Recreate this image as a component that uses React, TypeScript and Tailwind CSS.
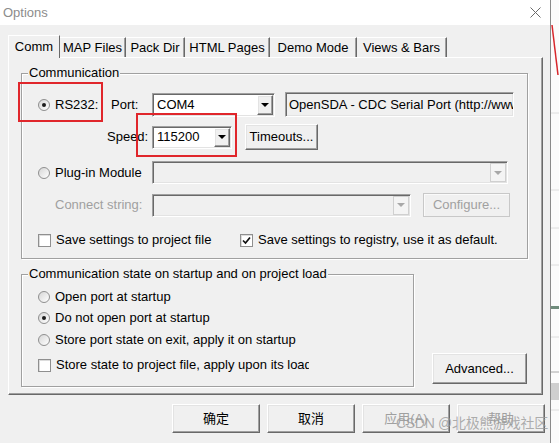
import React from "react";

const sunken =
  "border border-t-[#a0a0a0] border-l-[#a0a0a0] border-r-white border-b-white shadow-[inset_1px_1px_0_#696969,inset_-1px_-1px_0_#e3e3e3]";
const raised =
  "border border-t-white border-l-white border-r-[#696969] border-b-[#696969] shadow-[inset_-1px_-1px_0_#a0a0a0,inset_1px_1px_0_#e3e3e3] bg-[#f0f0f0]";

function Radio({ on }: { on?: boolean }) {
  return (
    <span className="flex h-[12px] w-[12px] shrink-0 items-center justify-center rounded-full border border-[#8f8f8f] bg-[linear-gradient(135deg,#d6d6d6,#ffffff)]">
      {on && <span className="h-[4px] w-[4px] rounded-full bg-[#1c1c1c]" />}
    </span>
  );
}

function Check({ on }: { on?: boolean }) {
  return (
    <span className="flex h-[13px] w-[13px] shrink-0 items-center justify-center border border-[#8f8f8f] bg-white shadow-[inset_1px_1px_0_#dcdcdc]">
      {on && (
        <svg width="9" height="9" viewBox="0 0 9 9">
          <path d="M1 4.5 L3.5 7 L8 1.5" stroke="#111" strokeWidth="1.7" fill="none" />
        </svg>
      )}
    </span>
  );
}

function Combo({ className, value, disabled }: { className: string; value?: string; disabled?: boolean }) {
  return (
    <div className={`${sunken} ${className} flex p-[1px] ${disabled ? "bg-[#f0f0f0]" : "bg-white"}`}>
      <div className="flex flex-1 items-center pl-[3px] text-[13px]">{value}</div>
      <div
        className={`flex w-[16px] items-center justify-center ${
          disabled ? "border border-[#d0d0d0] bg-[#f4f4f4]" : raised
        }`}
      >
        <span
          className={`border-x-[4px] border-t-[4px] border-x-transparent ${
            disabled ? "border-t-[#a8a8a8]" : "border-t-black"
          }`}
        />
      </div>
    </div>
  );
}

function Btn({ className, children, disabled }: { className: string; children: React.ReactNode; disabled?: boolean }) {
  return (
    <div
      className={`${className} ${raised} flex items-center justify-center text-[13px] ${
        disabled ? "text-[#a0a0a0]" : "text-black"
      }`}
    >
      {children}
    </div>
  );
}

const tabs = [
  { name: "MAP Files", w: "w-[66px]" },
  { name: "Pack Dir", w: "w-[59px]" },
  { name: "HTML Pages", w: "w-[85px]" },
  { name: "Demo Mode", w: "w-[87px]" },
  { name: "Views & Bars", w: "w-[90px]" },
];

export default function App() {
  return (
    <div className="relative flex h-[443px] w-[559px] overflow-hidden bg-white font-['Liberation_Sans','Noto_Sans_CJK_SC',sans-serif] text-[13px] text-black">
      {/* dialog */}
      <div className="flex w-[551px] flex-col border-r border-[#8a8a8a] bg-[#f0f0f0]">
        <div className="flex h-[25px] items-center justify-between bg-white pl-[3px] pr-[9px]">
          <span className="text-[13px] text-[#8c8c8c]">Options</span>
          <svg width="11" height="11" viewBox="0 0 11 11">
            <path d="M0.5 0.5 L10.5 10.5 M10.5 0.5 L0.5 10.5" stroke="#6a6a6a" strokeWidth="1" />
          </svg>
        </div>

        <div className="mt-[10px] flex h-[22px] items-end pl-[8px]">
          <div className="relative z-10 -mb-px flex h-[23px] w-[52px] items-center justify-center border-l border-t border-r border-l-white border-t-white border-r-[#696969] bg-[#f0f0f0] pb-[1px]">
            Comm
          </div>
          {tabs.map((t) => (
            <div
              key={t.name}
              className={`${t.w} flex h-[20px] items-center justify-center border-t border-r border-t-white border-r-[#696969] shadow-[inset_-1px_0_0_#a0a0a0]`}
            >
              {t.name}
            </div>
          ))}
        </div>

        <div className="ml-[8px] flex h-[338px] w-[535px] flex-col border border-t-white border-l-white border-r-[#696969] border-b-[#696969] shadow-[inset_-1px_-1px_0_#a0a0a0]">
          {/* group 1 */}
          <fieldset className="ml-[12px] mt-[7px] w-[507px] border border-[#a0a0a0] pb-[10px] pl-[6px] shadow-[1px_1px_0_#fff,inset_1px_1px_0_#fff]">
            <legend className="bg-[#f0f0f0] px-[1px] leading-[16px]">Communication</legend>
            <div className="flex flex-col pl-[10px]">
              <div className="mt-[11px] flex h-[25px] items-center">
                <div className="flex w-[73px] items-center gap-[5px]">
                  <Radio on />
                  <span>RS232:</span>
                </div>
                <span className="w-[41px]">Port:</span>
                <Combo className="h-[24px] w-[123px]" value="COM4" />
                <div className={`${sunken} ml-[10px] flex h-[25px] w-[229px] items-center overflow-hidden whitespace-nowrap bg-[#f0f0f0] pl-[3px]`}>
                  OpenSDA - CDC Serial Port (http://www.pemicro.com)
                </div>
              </div>

              <div className="mt-[7px] flex h-[26px] items-center">
                <span className="w-[114px] pl-[69px]">Speed:</span>
                <Combo className="h-[23px] w-[80px]" value="115200" />
                <Btn className="ml-[13px] h-[26px] w-[73px]">Timeouts...</Btn>
              </div>

              <div className="mt-[11px] flex h-[23px] items-center">
                <div className="flex w-[114px] items-center gap-[5px]">
                  <Radio />
                  <span className="w-[88px] overflow-hidden whitespace-nowrap">Plug-in Module</span>
                </div>
                <Combo className="h-[23px] w-[356px]" disabled />
              </div>

              <div className="mt-[9px] flex h-[24px] items-center">
                <span className="w-[114px] pl-[17px] text-[#a0a0a0]">Connect string:</span>
                <Combo className="h-[23px] w-[259px]" disabled />
                <div className="ml-[12px] flex h-[24px] w-[87px] items-center justify-center border border-[#c8c8c8] text-[#a0a0a0] shadow-[inset_1px_1px_0_#fafafa]">
                  Configure...
                </div>
              </div>

              <div className="mt-[15px] flex h-[16px] items-center">
                <div className="flex w-[202px] items-center gap-[5px]">
                  <Check />
                  <span>Save settings to project file</span>
                </div>
                <div className="flex items-center gap-[5px]">
                  <Check on />
                  <span>Save settings to registry, use it as default.</span>
                </div>
              </div>
            </div>
          </fieldset>

          {/* group 2 + advanced */}
          <div className="ml-[12px] mt-[7px] flex">
            <fieldset className="w-[393px] border border-[#a0a0a0] pb-[13px] pl-[6px] shadow-[1px_1px_0_#fff,inset_1px_1px_0_#fff]">
              <legend className="bg-[#f0f0f0] px-[1px] leading-[16px]">
                Communication state on startup and on project load
              </legend>
              <div className="flex flex-col pl-[10px]">
                <div className="mt-[7px] flex h-[16px] items-center gap-[5px]">
                  <Radio />
                  <span>Open port at startup</span>
                </div>
                <div className="mt-[5px] flex h-[16px] items-center gap-[5px]">
                  <Radio on />
                  <span>Do not open port at startup</span>
                </div>
                <div className="mt-[6px] flex h-[16px] items-center gap-[5px]">
                  <Radio />
                  <span>Store port state on exit, apply it on startup</span>
                </div>
                <div className="mt-[9px] flex h-[16px] items-center gap-[5px]">
                  <Check />
                  <span className="w-[253px] overflow-hidden whitespace-nowrap">
                    Store state to project file, apply upon its load
                  </span>
                </div>
              </div>
            </fieldset>
            <Btn className="mb-[3px] ml-[18px] h-[31px] w-[95px] self-end">Advanced...</Btn>
          </div>
        </div>

        <div className="mt-[9px] flex justify-end gap-[7px] pr-[5px]">
          <Btn className="h-[29px] w-[88px]">确定</Btn>
          <Btn className="h-[29px] w-[88px]">取消</Btn>
          <Btn className="h-[29px] w-[88px]" disabled>
            应用(A)
          </Btn>
          <Btn className="h-[29px] w-[88px]" disabled>
            帮助
          </Btn>
        </div>
      </div>

      {/* background window strip */}
      <div className="flex-1">
        <svg width="8" height="443" viewBox="0 0 8 443">
          <rect width="8" height="443" fill="#fbfbfb" />
          <path d="M1 25 L7 75" stroke="#d8262b" strokeWidth="1.5" />
          <path d="M0 113 H8 M0 190 H8 M0 228 H8 M0 265 H8 M0 337 H8 M0 410 H8" stroke="#dedede" />
          <rect y="306" width="8" height="3" fill="#6f8c7c" />
          <path d="M0 372 H8" stroke="#a8a8a8" />
          <rect y="383" width="8" height="17" fill="#cfcfcf" />
        </svg>
      </div>

      {/* annotations */}
      <div className="absolute left-[18px] top-[82px] h-[40px] w-[85px] border-2 border-[#e0262b]" />
      <div className="absolute left-[136px] top-[113px] h-[44px] w-[101px] border-2 border-[#e0262b]" />
      <div className="absolute left-[396px] top-[413px] whitespace-nowrap text-[14px] tracking-[-0.3px] text-[#9a9a9a]/80">
        CSDN @北极熊游戏社区
      </div>
    </div>
  );
}
